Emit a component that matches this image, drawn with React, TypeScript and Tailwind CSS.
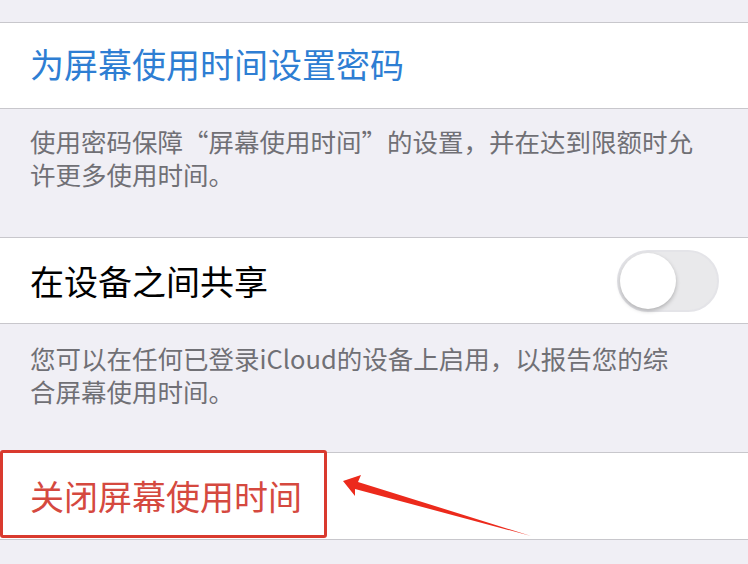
import React, { useState } from 'react';

const font = { fontFamily: '"Noto Sans CJK SC", "Noto Sans", sans-serif' };

const Toggle = ({ on, onChange }: { on: boolean; onChange: () => void }) => (
  <button
    onClick={onChange}
    className={`relative w-[102px] h-[62px] rounded-full border-2 transition-colors ${
      on ? 'bg-[#4cd964] border-[#4cd964]' : 'bg-[#e9e9eb] border-[#e4e4e8]'
    }`}
  >
    <span
      className={`absolute top-[1px] w-[56px] h-[56px] rounded-full bg-white shadow-[0_2px_4px_rgba(0,0,0,0.25)] transition-all ${
        on ? 'left-[42px]' : 'left-[1px]'
      }`}
    />
  </button>
);

const Footer = ({ lines, pt }: { lines: string[]; pt: string }) => (
  <div className={`h-[128px] pl-[30px] pr-[30px] ${pt} flex flex-col gap-[2px] text-[#707075]`}>
    {lines.map((l, i) => (
      <div key={i} className="text-[25.5px] leading-[31px]">
        {l}
      </div>
    ))}
  </div>
);

export default function App() {
  const [shared, setShared] = useState(false);

  return (
    <div className="relative w-[748px] h-[564px] overflow-hidden bg-[#f0eff5]" style={font}>
      <div className="h-[22px]" />

      {/* passcode row */}
      <div className="h-[87px] bg-white border-y border-[#c8c7cc] flex items-center pl-[30px] pb-[3px]">
        <span className="text-[34px] leading-none text-[#2e7ed3]">为屏幕使用时间设置密码</span>
      </div>

      <Footer pt="pt-[16px]" lines={['使用密码保障“屏幕使用时间”的设置，并在达到限额时允', '许更多使用时间。']} />

      {/* share row */}
      <div className="h-[87px] bg-white border-y border-[#c8c7cc] flex items-center justify-between pl-[30px] pr-[29px]">
        <span className="text-[34px] leading-none text-black">在设备之间共享</span>
        <Toggle on={shared} onChange={() => setShared(!shared)} />
      </div>

      <Footer pt="pt-[18px]" lines={['您可以在任何已登录iCloud的设备上启用，以报告您的综', '合屏幕使用时间。']} />

      {/* turn off row */}
      <div className="relative h-[88px] bg-white border-y border-[#c8c7cc] flex items-center pl-[30px]">
        <span className="text-[34px] leading-none text-[#d5493f]">关闭屏幕使用时间</span>
        <div className="absolute left-0 top-[-3px] w-[327px] h-[88px] border-[3px] border-[#d93a2e] rounded-[3px]" />
      </div>

      {/* annotation arrow */}
      <svg
        className="absolute left-0 top-0 pointer-events-none"
        width="748"
        height="564"
        viewBox="0 0 748 564"
      >
        <polygon
          points="343,481 361,475 358,482 531,536 355,489 355,496"
          fill="#ec2a1c"
        />
      </svg>
    </div>
  );
}
